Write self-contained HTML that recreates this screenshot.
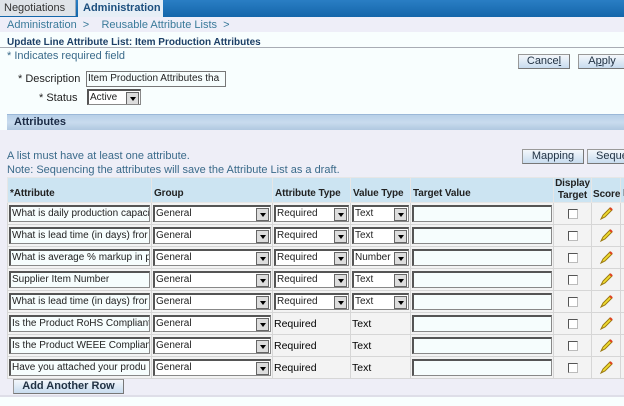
<!DOCTYPE html>
<html><head><style>
*{box-sizing:border-box;margin:0;padding:0}
body{width:624px;height:406px;overflow:hidden;background:#fff;font-family:"Liberation Sans",Arial,sans-serif;font-size:11px;color:#000;position:relative}
.a{position:absolute}
.btn{position:absolute;height:15px;border:1px solid #999;border-right-color:#777;border-bottom-color:#777;background:linear-gradient(#f4f7fb,#c8dcef);color:#234;font-size:11px;text-align:center;line-height:13px}
.inp{border:1px solid #888;border-top:2px solid #555;border-left:2px solid #555;background:#f6fdfd;height:17px;font-size:10px;line-height:13px;padding-left:1px;white-space:nowrap;overflow:hidden;color:#222}
.sel{position:relative;background:#fff}
.sel:after{content:"";position:absolute;right:1px;top:1px;width:11px;height:11px;background:#ddd;border:1px solid #666}
.sel:before{content:"";position:absolute;right:4px;top:6px;border:3px solid transparent;border-top:4px solid #000;z-index:2}
table{border-collapse:collapse;table-layout:fixed}
td,th{border:1px solid #d6d6d6;height:22px;padding:1px 1px;vertical-align:middle;background:#f3f3f3;font-size:10.5px;white-space:nowrap;overflow:hidden}
th{background:#cce4f2;text-align:left;font-weight:bold;color:#222;vertical-align:bottom;padding:1px 2px 2px;line-height:12px;height:24px;border-color:#e6e6e6;font-size:10px;letter-spacing:-0.1px}
.cb{width:10px;height:10px;border:1px solid #555;border-right-color:#bbb;border-bottom-color:#bbb;background:#fff;margin:0 auto}
.pen{display:block;margin:0 auto}
</style></head><body>
<div class="a" style="left:0;top:0;width:624px;height:17px;background:linear-gradient(#2a7ec4,#1466aa)"></div>
<div class="a" style="left:0;top:0;width:76px;height:16px;background:#dfe3e8;border-right:1px solid #9ab;color:#333;font-size:11px;line-height:16px;padding-left:4px">Negotiations</div>
<div class="a" style="left:78px;top:0;width:85px;height:17px;background:#e6eef6;color:#1c4f7e;font-weight:bold;font-size:11px;line-height:16px;padding-left:5px">Administration</div>
<div class="a" style="left:0;top:17px;width:624px;height:15px;background:#eeeef8"></div>
<div class="a" style="left:7px;top:18px;color:#3a7a9a;font-size:11px;line-height:14px">Administration &nbsp;&gt;&nbsp;&nbsp;&nbsp; Reusable Attribute Lists &nbsp;&gt;</div>
<div class="a" style="left:0;top:32px;width:624px;height:374px;background:#f8fefe"></div>
<div class="a" style="left:7px;top:36px;color:#1c3f66;font-weight:bold;font-size:10px;line-height:13px">Update Line Attribute List: Item Production Attributes</div>
<div class="a" style="left:0;top:47px;width:624px;height:1px;background:#a8acb4"></div>
<div class="a" style="left:7px;top:50px;color:#3a6a8a;line-height:13px">* Indicates required field</div>
<div class="btn" style="left:518px;top:54px;width:52px">Cance<u>l</u></div>
<div class="btn" style="left:578px;top:54px;width:48px">A<u>p</u>ply</div>
<div class="a" style="left:18px;top:73px;color:#222">* Description</div>
<div class="a inp" style="left:86px;top:71px;width:140px;height:16px;border-width:1px;border-color:#777">Item Production Attributes tha</div>
<div class="a" style="left:39px;top:92px;color:#222">* Status</div>
<div class="a inp sel" style="left:87px;top:89px;width:54px;height:16px">Active</div>
<div class="a" style="left:7px;top:114px;width:617px;height:16px;background:linear-gradient(#b8d0e8,#c8dbee 50%,#b0c8e0);border-top:1px solid #9bb8d8"></div>
<div class="a" style="left:14px;top:115px;font-weight:bold;color:#1a2a44;line-height:14px">Attributes</div>
<div class="a" style="left:0;top:130px;width:624px;height:265px;background:#eeeef7"></div>
<div class="a" style="left:7px;top:150px;color:#3a6a8a;line-height:13px">A list must have at least one attribute.</div>
<div class="a" style="left:7px;top:164px;color:#3a6a8a;line-height:13px;white-space:nowrap">Note: Sequencing the attributes will save the Attribute List as a draft.</div>
<div class="btn" style="left:522px;top:149px;width:62px">Mapping</div>
<div class="btn" style="left:587px;top:149px;width:50px;text-align:left;padding-left:8px">Seque</div>
<table class="a" style="left:7px;top:177px;width:630px">
<colgroup><col style="width:144px"><col style="width:121px"><col style="width:78px"><col style="width:60px"><col style="width:143px"><col style="width:38px"><col style="width:29px"><col style="width:17px"></colgroup>
<tr><th>*Attribute</th><th>Group</th><th>Attribute Type</th><th>Value Type</th><th>Target Value</th><th style="text-align:center;padding:0">Display<br>Target</th><th style="padding:1px">Score</th><th>D</th></tr>
<tr><td><div class="inp">What is daily production capaci</div></td><td><div class="inp sel">General</div></td><td><div class="inp sel">Required</div></td><td><div class="inp sel">Text</div></td><td><div class="inp"></div></td><td><div class="cb"></div></td><td><svg class="pen" width="14" height="14"><path d="M2 12 L4 8 L11 1 L13 3 L6 10 Z" fill="#f0dc30" stroke="#9a7a10" stroke-width="1"/><path d="M11 1 L13 3" stroke="#e04020" stroke-width="2"/></svg></td><td></td></tr>
<tr><td><div class="inp">What is lead time (in days) fror</div></td><td><div class="inp sel">General</div></td><td><div class="inp sel">Required</div></td><td><div class="inp sel">Text</div></td><td><div class="inp"></div></td><td><div class="cb"></div></td><td><svg class="pen" width="14" height="14"><path d="M2 12 L4 8 L11 1 L13 3 L6 10 Z" fill="#f0dc30" stroke="#9a7a10" stroke-width="1"/><path d="M11 1 L13 3" stroke="#e04020" stroke-width="2"/></svg></td><td></td></tr>
<tr><td><div class="inp">What is average % markup in p</div></td><td><div class="inp sel">General</div></td><td><div class="inp sel">Required</div></td><td><div class="inp sel">Number</div></td><td><div class="inp"></div></td><td><div class="cb"></div></td><td><svg class="pen" width="14" height="14"><path d="M2 12 L4 8 L11 1 L13 3 L6 10 Z" fill="#f0dc30" stroke="#9a7a10" stroke-width="1"/><path d="M11 1 L13 3" stroke="#e04020" stroke-width="2"/></svg></td><td></td></tr>
<tr><td><div class="inp">Supplier Item Number</div></td><td><div class="inp sel">General</div></td><td><div class="inp sel">Required</div></td><td><div class="inp sel">Text</div></td><td><div class="inp"></div></td><td><div class="cb"></div></td><td><svg class="pen" width="14" height="14"><path d="M2 12 L4 8 L11 1 L13 3 L6 10 Z" fill="#f0dc30" stroke="#9a7a10" stroke-width="1"/><path d="M11 1 L13 3" stroke="#e04020" stroke-width="2"/></svg></td><td></td></tr>
<tr><td><div class="inp">What is lead time (in days) fror</div></td><td><div class="inp sel">General</div></td><td><div class="inp sel">Required</div></td><td><div class="inp sel">Text</div></td><td><div class="inp"></div></td><td><div class="cb"></div></td><td><svg class="pen" width="14" height="14"><path d="M2 12 L4 8 L11 1 L13 3 L6 10 Z" fill="#f0dc30" stroke="#9a7a10" stroke-width="1"/><path d="M11 1 L13 3" stroke="#e04020" stroke-width="2"/></svg></td><td></td></tr>
<tr><td><div class="inp">Is the Product RoHS Compliant</div></td><td><div class="inp sel">General</div></td><td>Required</td><td>Text</td><td><div class="inp"></div></td><td><div class="cb"></div></td><td><svg class="pen" width="14" height="14"><path d="M2 12 L4 8 L11 1 L13 3 L6 10 Z" fill="#f0dc30" stroke="#9a7a10" stroke-width="1"/><path d="M11 1 L13 3" stroke="#e04020" stroke-width="2"/></svg></td><td></td></tr>
<tr><td><div class="inp">Is the Product WEEE Complian</div></td><td><div class="inp sel">General</div></td><td>Required</td><td>Text</td><td><div class="inp"></div></td><td><div class="cb"></div></td><td><svg class="pen" width="14" height="14"><path d="M2 12 L4 8 L11 1 L13 3 L6 10 Z" fill="#f0dc30" stroke="#9a7a10" stroke-width="1"/><path d="M11 1 L13 3" stroke="#e04020" stroke-width="2"/></svg></td><td></td></tr>
<tr><td><div class="inp">Have you attached your produ</div></td><td><div class="inp sel">General</div></td><td>Required</td><td>Text</td><td><div class="inp"></div></td><td><div class="cb"></div></td><td><svg class="pen" width="14" height="14"><path d="M2 12 L4 8 L11 1 L13 3 L6 10 Z" fill="#f0dc30" stroke="#9a7a10" stroke-width="1"/><path d="M11 1 L13 3" stroke="#e04020" stroke-width="2"/></svg></td><td></td></tr>
</table>
<div class="btn" style="left:13px;top:379px;width:111px;font-weight:bold">Add Another Row</div>
<div class="a" style="left:0;top:395px;width:624px;height:2px;background:#dedee8"></div>
</body></html>
